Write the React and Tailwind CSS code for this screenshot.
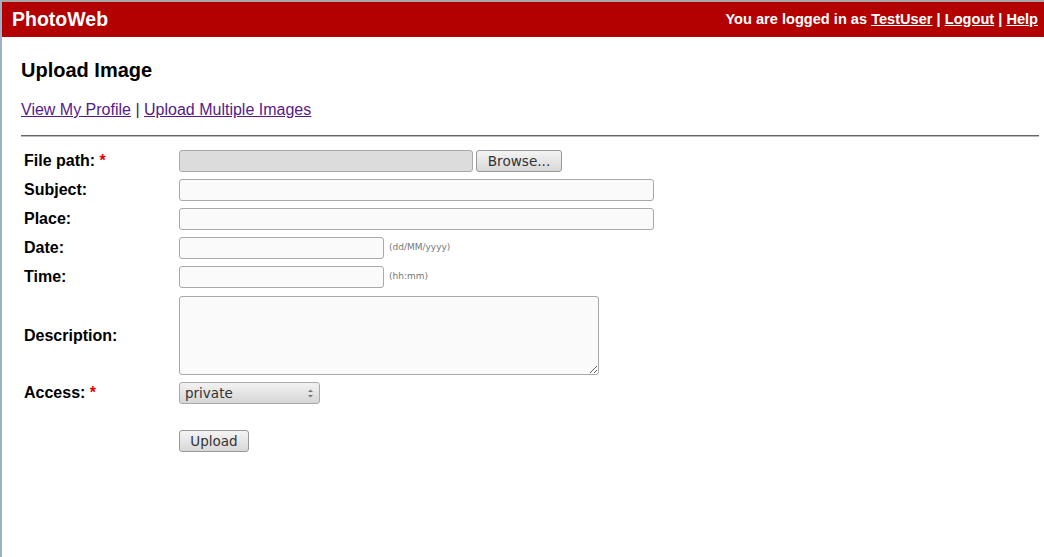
import React from "react";

const labelCls = "w-[155px] shrink-0 font-bold text-[16px] leading-[22px] text-black";
const inputCls =
  "h-[22px] rounded-[3px] border border-[#a9a9a9] bg-[#fafafa] outline-none";

function Row({ label, required, children, className = "" }) {
  return (
    <div className={`flex items-center ${className}`}>
      <div className={labelCls}>
        {label}
        {required && <span className="text-[#e00000]"> *</span>}
      </div>
      {children}
    </div>
  );
}

export default function App() {
  return (
    <div
      className="min-h-[557px] border-t-2 border-t-[#a8a8a8] border-l-2 border-l-[#9fb1c4] bg-white"
      style={{ fontFamily: '"Liberation Sans", Arial, sans-serif' }}
    >
      <div className="flex h-[35px] items-center justify-between bg-[#b30000] pl-[10px] pr-[6px] text-white">
        <div className="text-[19.5px] font-bold">PhotoWeb</div>
        <div className="text-[14.6px] font-bold">
          You are logged in as <a href="#" className="underline">TestUser</a> |{" "}
          <a href="#" className="underline">Logout</a> |{" "}
          <a href="#" className="underline">Help</a>
        </div>
      </div>

      <div className="pl-[19px] pr-[5px]">
        <h1 className="mt-[21px] text-[20px] font-bold leading-[24px]">Upload Image</h1>
        <div className="mt-[19px] text-[16px] leading-[18px] text-[#333]">
          <a href="#" className="text-[#551a8b] underline">View My Profile</a> |{" "}
          <a href="#" className="text-[#551a8b] underline">Upload Multiple Images</a>
        </div>
        <div className="mt-[16px] h-[2px] bg-[#666] border-b border-b-[#bbb]" />

        <div className="mt-[13px] flex flex-col gap-[7px] pl-[3px]">
          <Row label="File path:" required>
            <div className="flex items-center gap-[3px]">
              <div className="h-[22px] w-[294px] rounded-[3px] border border-[#a9a9a9] bg-[#dcdcdc]" />
              <button
                className="h-[22px] w-[86px] rounded-[3px] border border-[#999] bg-gradient-to-b from-[#f4f4f4] to-[#d8d8d8] text-[13.6px] text-[#333]"
                style={{ fontFamily: '"DejaVu Sans", sans-serif' }}
              >
                Browse...
              </button>
            </div>
          </Row>
          <Row label="Subject:">
            <input className={`${inputCls} w-[475px]`} />
          </Row>
          <Row label="Place:">
            <input className={`${inputCls} w-[475px]`} />
          </Row>
          <Row label="Date:">
            <input className={`${inputCls} w-[205px]`} />
            <span
              className="ml-[5px] text-[9px] text-[#777]"
              style={{ fontFamily: '"DejaVu Sans", sans-serif' }}
            >
              (dd/MM/yyyy)
            </span>
          </Row>
          <Row label="Time:">
            <input className={`${inputCls} w-[205px]`} />
            <span
              className="ml-[5px] text-[9px] text-[#777]"
              style={{ fontFamily: '"DejaVu Sans", sans-serif' }}
            >
              (hh:mm)
            </span>
          </Row>
          <Row label="Description:" className="mt-[1px]">
            <textarea className="h-[79px] w-[420px] resize rounded-[3px] border border-[#a9a9a9] bg-[#fafafa] outline-none" />
          </Row>
          <Row label="Access:" required>
            <div
              className="relative flex h-[22px] w-[141px] items-center rounded-[3px] border border-[#a9a9a9] bg-gradient-to-b from-[#f2f2f2] to-[#d6d6d6] pl-[5px] text-[13.5px] text-[#333]"
              style={{ fontFamily: '"DejaVu Sans", sans-serif' }}
            >
              private
              <svg className="absolute right-[5px] top-[5px]" width="7" height="11" viewBox="0 0 7 11">
                <path d="M1 4 L3.5 1.5 L6 4 Z" fill="#777" />
                <path d="M1 7 L3.5 9.5 L6 7 Z" fill="#777" />
              </svg>
            </div>
          </Row>
          <div className="mt-[19px] flex">
            <div className="w-[155px] shrink-0" />
            <button
              className="h-[22px] w-[70px] rounded-[3px] border border-[#999] bg-gradient-to-b from-[#f4f4f4] to-[#d8d8d8] text-[13.5px] text-[#333]"
              style={{ fontFamily: '"DejaVu Sans", sans-serif' }}
            >
              Upload
            </button>
          </div>
        </div>
      </div>
    </div>
  );
}
